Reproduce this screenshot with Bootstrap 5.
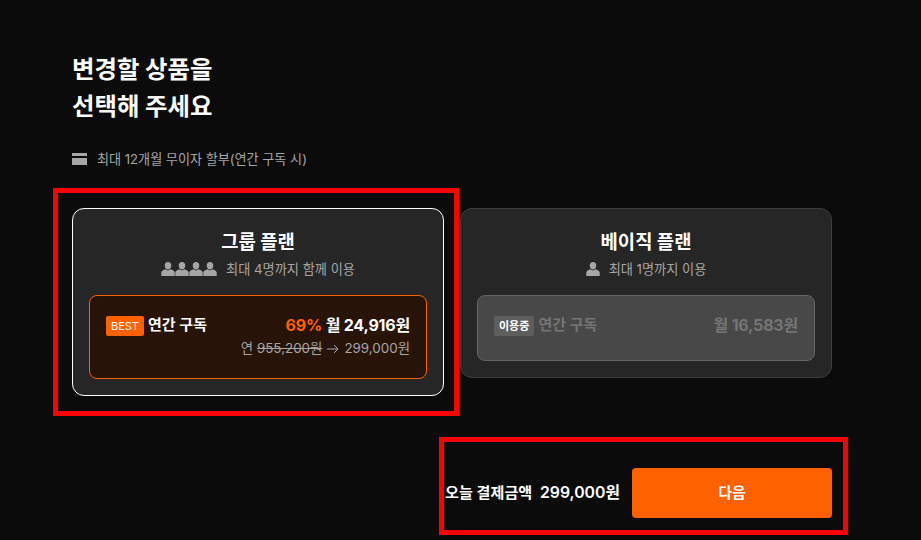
<!DOCTYPE html>
<html lang="ko">
<head>
<meta charset="utf-8">
<title>플랜 변경</title>
<link href="https://cdn.jsdelivr.net/npm/bootstrap@5.3.0/dist/css/bootstrap.min.css" rel="stylesheet">
<style>
html,body{height:540px;overflow:hidden}
body{background:#0b0b0b;color:#fff;font-family:Inter,"Noto Sans CJK KR",sans-serif;position:relative}
.page-wrap{width:760px;margin-left:72px;padding-top:51px}
.headline{font-size:24.400px;line-height:37px;font-weight:700;margin:0}
.install{margin-top:24px;font-size:13.100px;line-height:20px;color:#a6a6a6;gap:9px;height:20px}
.plans{margin-top:39px;gap:16px}
.plan{flex:1 1 0;min-width:0;background:#262626;border:1px solid #3f3f3f;border-radius:12px;padding:16px;text-align:center}
.plan.on{border-color:#fff}
.plan-name{font-size:18.800px;line-height:27px;font-weight:700;margin:4px 0 0}
.plan-sub{font-size:13.200px;line-height:20px;color:#a6a6a6;margin-top:3px;gap:9px}
.people{display:flex}
.offer{margin-top:16px;border:1px solid #666;background:#484848;border-radius:8px;padding:19px 16px 0;height:66px}
.offer.hot{border-color:#ff6000;background:#281308;height:84px}
.tag{font-size:11px;line-height:20px;height:20px;padding:0 5px;border-radius:2px;background:#5e5e5e;color:#fff;font-weight:600;position:relative;top:1px}
.hot .tag{background:#ff6000;font-weight:400}
.term{font-size:15px;line-height:20px;font-weight:600;margin-left:4px;color:#fff}
.offer:not(.hot) .term,.offer:not(.hot) .price{color:#757575}
.price{font-size:16px;line-height:20px;font-weight:700;color:#fff;white-space:nowrap;letter-spacing:-.2px}
.pct{color:#ff6000}
.yearly{font-size:13.400px;line-height:20px;color:#a6a6a6;margin-top:3px;text-align:right}
.arrow-glyph{display:inline-block;margin:0 5px;vertical-align:-1px}
.footer-row{margin-top:72px;gap:12px;height:50px}
.pay{font-size:15.100px;font-weight:600;white-space:nowrap}
.pay span{margin-left:4px;font-size:15.800px}
.btn-next{width:200px;height:50px;background:#ff6000;border:0;border-radius:4px;color:#fff;font-size:15px;font-weight:700}
.btn-next:hover{background:#ff6000;color:#fff}
.mark-box{position:absolute;border:5px solid #f00;pointer-events:none}
.mark-a{left:53px;top:188px;width:406px;height:228px}
.mark-b{left:439px;top:437px;width:409px;height:98px}
</style>
</head>
<body>
<div class="page-wrap">
  <h1 class="headline">변경할 상품을<br>선택해 주세요</h1>
  <div class="install d-flex align-items-center">
    <svg width="16" height="12" viewBox="0 0 16 12" aria-hidden="true"><path fill="#a6a6a6" d="M0 0h15v3H0zM0 5h15v7H0z"/></svg>
    <span>최대 12개월 무이자 할부(연간 구독 시)</span>
  </div>
  <div class="plans d-flex align-items-start">
    <div class="plan on">
      <div class="plan-name">그룹 플랜</div>
      <div class="plan-sub d-flex justify-content-center align-items-center">
        <span class="people">
          <svg width="14" height="14" viewBox="0 0 14 14"><use href="#person"/></svg><svg width="14" height="14" viewBox="0 0 14 14"><use href="#person"/></svg><svg width="14" height="14" viewBox="0 0 14 14"><use href="#person"/></svg><svg width="14" height="14" viewBox="0 0 14 14"><use href="#person"/></svg>
        </span>
        <span>최대 4명까지 함께 이용</span>
      </div>
      <div class="offer hot">
        <div class="d-flex justify-content-between align-items-center">
          <div class="d-flex align-items-center"><span class="tag">BEST</span><span class="term">연간 구독</span></div>
          <div class="price"><span class="pct">69%</span> 월 24,916원</div>
        </div>
        <div class="yearly">연 <s>955,200원</s><svg class="arrow-glyph" width="12" height="10" viewBox="0 0 12 10" aria-hidden="true"><path fill="none" stroke="#a6a6a6" stroke-width="1" d="M0 5h11M7 1l4 4-4 4"/></svg>299,000원</div>
      </div>
    </div>
    <div class="plan">
      <div class="plan-name">베이직 플랜</div>
      <div class="plan-sub d-flex justify-content-center align-items-center">
        <svg width="14" height="14" viewBox="0 0 14 14"><use href="#person"/></svg>
        <span>최대 1명까지 이용</span>
      </div>
      <div class="offer">
        <div class="d-flex justify-content-between align-items-center">
          <div class="d-flex align-items-center"><span class="tag">이용중</span><span class="term">연간 구독</span></div>
          <div class="price">월 16,583원</div>
        </div>
      </div>
    </div>
  </div>
  <div class="footer-row d-flex justify-content-end align-items-center">
    <div class="pay">오늘 결제금액 <span>299,000원</span></div>
    <button type="button" class="btn btn-next">다음</button>
  </div>
</div>
<div class="mark-box mark-a"></div>
<div class="mark-box mark-b"></div>
<svg width="0" height="0" class="d-block position-absolute"><defs><path id="person" fill="#a6a6a6" d="M7 0c2 0 3.300 1.400 3.300 3.500C10.300 5.500 9 7.600 7 7.600S3.700 5.500 3.700 3.500C3.700 1.400 5 0 7 0zM4.600 7.300C5.300 8 6.100 8.400 7 8.400s1.700-.4 2.400-1.100c2.200.5 3.900 1.500 4.300 3.100V14H.3V10.400C.7 8.800 2.400 7.800 4.600 7.300z"/></defs></svg>
</body>
</html>
